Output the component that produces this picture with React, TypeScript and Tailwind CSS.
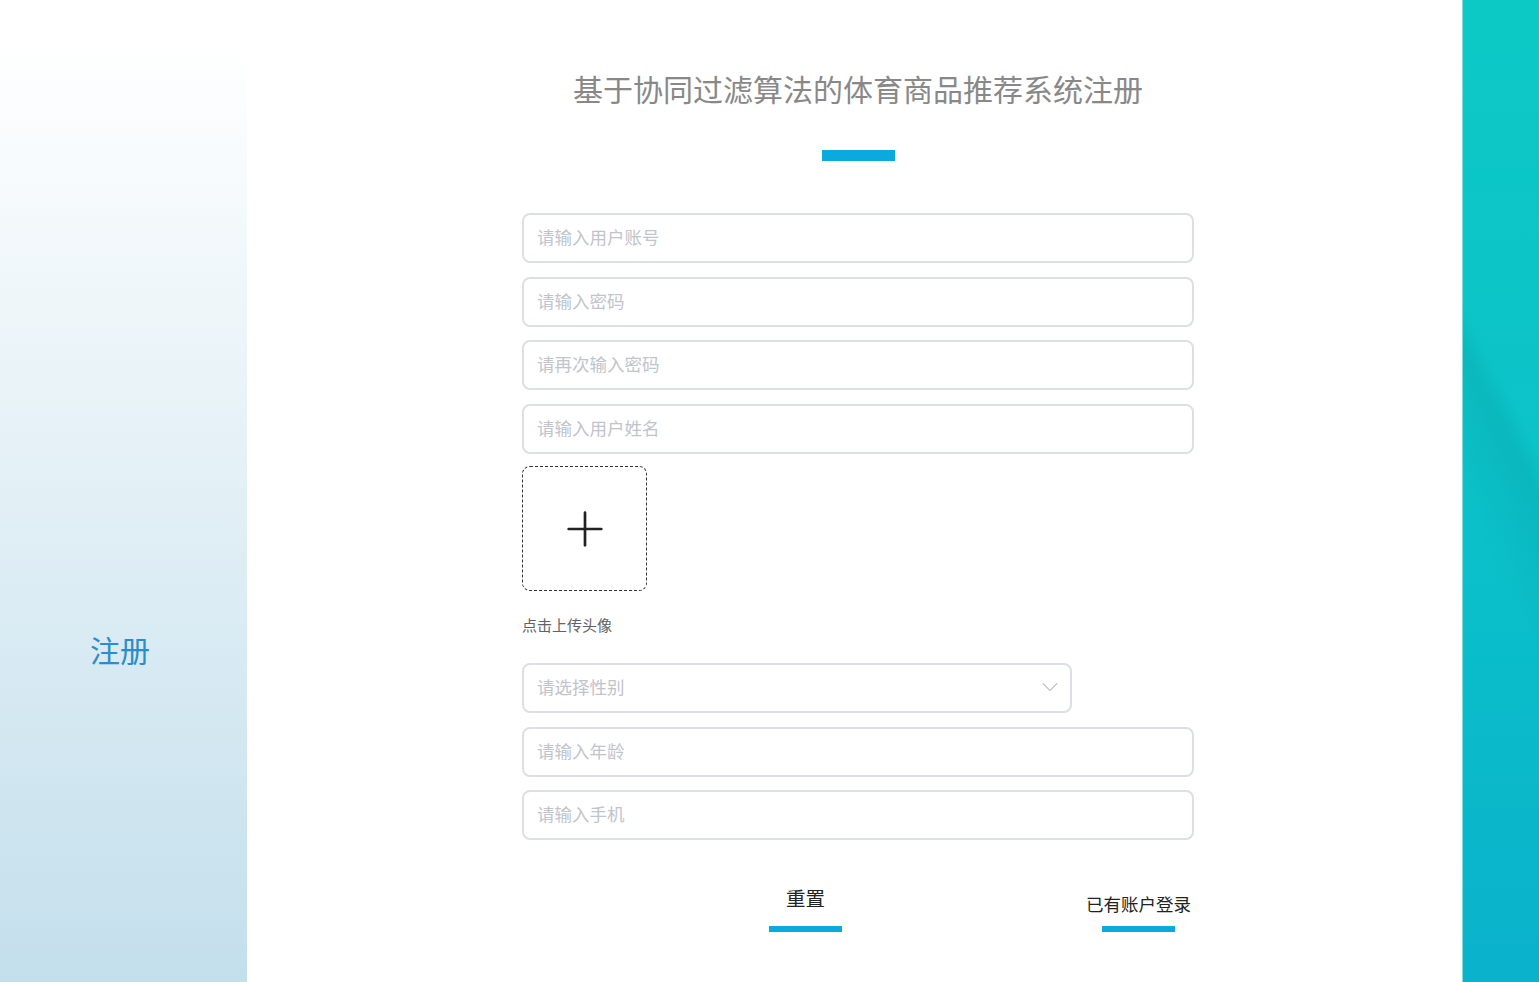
import { ChevronDown, Plus } from 'lucide-react';

const FONT = "font-['Noto_Sans_CJK_SC','Noto_Sans',sans-serif]";

const inputCls =
    'h-[50px] w-full rounded-[8px] border-2 border-[#dcdfe6] bg-white px-[13px] pb-[3px] text-[17.5px] text-[#606266] outline-none placeholder:text-[#c0c4cc]';

export default function App() {
    return (
        <div className={`${FONT} flex h-[982px] w-full overflow-hidden bg-white`}>
            {/* 左侧栏 */}
            <aside className="flex w-[247px] shrink-0 flex-col bg-gradient-to-b from-white from-[4%] to-[#c3dfec]">
                <div className="mt-[627px] pr-[7px] text-center text-[30px] leading-[44px] text-[#2a8dcc]">注册</div>
            </aside>

            {/* 表单区 */}
            <main className="flex flex-1 flex-col items-center pl-[7px]">
                <h1 className="mt-[66px] text-[30px] leading-[44px] text-[#888888]">
                    基于协同过滤算法的体育商品推荐系统注册
                </h1>
                <div className="mt-[40px] h-[11px] w-[73px] bg-[#0aa9de]" />

                <form className="mt-[52px] flex w-[672px] flex-col gap-[13.6px]">
                    <input className={inputCls} placeholder="请输入用户账号" />
                    <input className={inputCls} type="password" placeholder="请输入密码" />
                    <input className={inputCls} type="password" placeholder="请再次输入密码" />
                    <input className={inputCls} placeholder="请输入用户姓名" />

                    <div>
                        <div className="mt-[-1px] flex h-[125px] w-[125px] items-center justify-center rounded-[8px] border border-dashed border-[#333]">
                            <Plus size={56} strokeWidth={1.15} className="text-[#222]" />
                        </div>
                        <div className="mt-[24px] text-[15px] leading-[20px] text-[#606266]">点击上传头像</div>
                    </div>

                    <div className="relative mt-[14px] w-[550px]">
                        <input className={inputCls} readOnly placeholder="请选择性别" />
                        <ChevronDown size={28} strokeWidth={0.9} className="absolute right-[8px] top-[10px] text-[#a8abb2]" />
                    </div>
                    <input className={inputCls} placeholder="请输入年龄" />
                    <input className={inputCls} placeholder="请输入手机" />

                    <div className="mt-[31px] flex items-start">
                        <button type="reset" className="ml-[247px] flex w-[73px] flex-col items-center">
                            <span className="text-[19.5px] leading-[26px] text-[#222]">重置</span>
                            <span className="mt-[15px] h-[6px] w-[73px] bg-[#0aa9de]" />
                        </button>
                        <button type="button" className="ml-auto mr-[3px] flex flex-col items-center">
                            <span className="mt-[6px] text-[17.5px] leading-[26px] text-[#222]">已有账户登录</span>
                            <span className="mt-[9px] h-[6px] w-[73px] bg-[#0aa9de]" />
                        </button>
                    </div>
                </form>
            </main>

            {/* 右侧装饰条 */}
            <aside className="relative w-[77px] shrink-0 overflow-hidden border-l border-[#7fdedd] bg-gradient-to-b from-[#0dc9c5] via-[#0bc2c9] to-[#0ab2cb]">
                <div className="absolute inset-0 bg-[linear-gradient(63deg,transparent_42%,rgba(0,110,120,0.13)_56%,transparent_60%)]" />
            </aside>
        </div>
    );
}
